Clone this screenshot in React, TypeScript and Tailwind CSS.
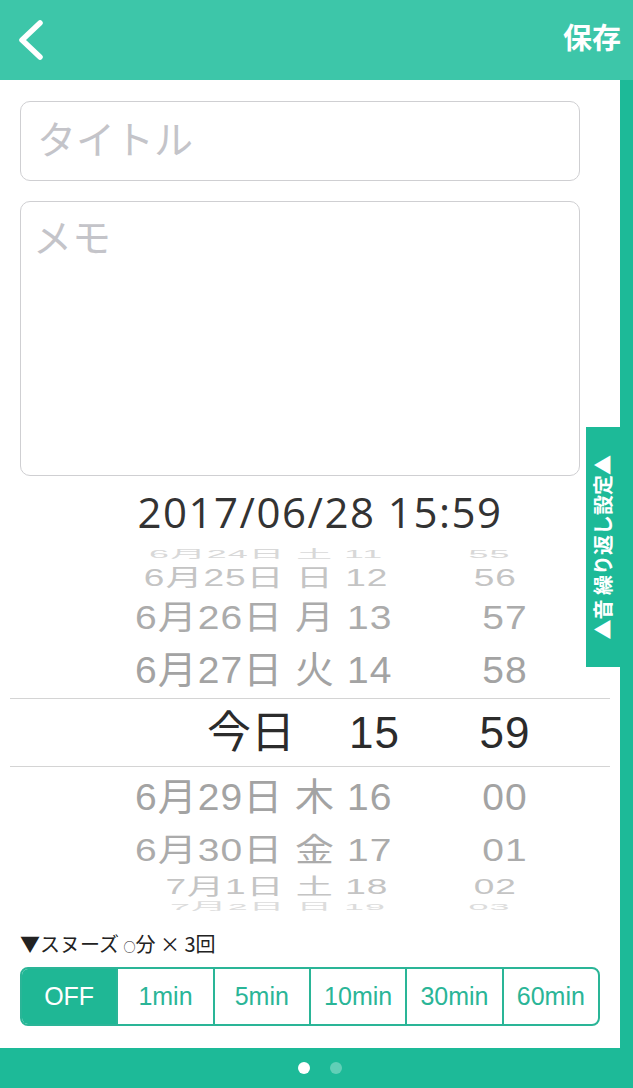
import React from 'react';

interface PickerRow {
  date: string;
  hour: string;
  minute: string;
  height: string;
  scale: string;
  color: string;
}

const upperRows: PickerRow[] = [
  { date: '6月24日 土', hour: '11', minute: '55', height: 'h-[18px]', scale: 'scale-y-[0.3] scale-x-[0.92]', color: 'text-[#d8d8d8]' },
  { date: '6月25日 日', hour: '12', minute: '56', height: 'h-[31px]', scale: 'scale-y-[0.6] scale-x-[0.95]', color: 'text-[#c4c4c4]' },
  { date: '6月26日 月', hour: '13', minute: '57', height: 'h-[48px]', scale: 'scale-y-[0.85]', color: 'text-[#ababab]' },
  { date: '6月27日 火', hour: '14', minute: '58', height: 'h-[57px]', scale: 'scale-y-[0.97]', color: 'text-[#a3a3a3]' },
];

const lowerRows: PickerRow[] = [
  { date: '6月29日 木', hour: '16', minute: '00', height: 'h-[58px]', scale: 'scale-y-[0.97]', color: 'text-[#a3a3a3]' },
  { date: '6月30日 金', hour: '17', minute: '01', height: 'h-[48px]', scale: 'scale-y-[0.82]', color: 'text-[#ababab]' },
  { date: '7月1日 土', hour: '18', minute: '02', height: 'h-[27px]', scale: 'scale-y-[0.55] scale-x-[0.95]', color: 'text-[#c4c4c4]' },
  { date: '7月2日 日', hour: '19', minute: '03', height: 'h-[12px]', scale: 'scale-y-[0.25] scale-x-[0.92]', color: 'text-[#dcdcdc]' },
];

const snoozeOptions = ['OFF', '1min', '5min', '10min', '30min', '60min'];

function WheelRow({ row }: { row: PickerRow }) {
  return (
    <div className={`flex items-center overflow-hidden ${row.height} ${row.color}`}>
      <div className={`flex w-full items-center text-[39px] leading-none tracking-[1px] ${row.scale}`}>
        <span className="w-[325px] text-right whitespace-nowrap">{row.date}</span>
        <span className="w-[90px] pl-3">{row.hour}</span>
        <span className="w-[160px] text-center">{row.minute}</span>
      </div>
    </div>
  );
}

export default function App() {
  return (
    <div
      className="flex h-[1088px] w-[633px] flex-col overflow-hidden bg-[#1dba98]"
      style={{ fontFamily: '"Liberation Sans", "Noto Sans CJK JP", sans-serif' }}
    >
      {/* Header */}
      <div className="flex h-[80px] items-center justify-between bg-[#3dc6a9] pl-[14px] pr-[12px]">
        <svg width="32" height="40" viewBox="0 0 32 40" fill="none">
          <polyline points="26,3 8,20 26,37" stroke="white" strokeWidth="5.5" strokeLinecap="round" strokeLinejoin="round" />
        </svg>
        <span className="text-[29px] font-bold text-white">保存</span>
      </div>

      <div className="flex flex-1">
        {/* Main content */}
        <div className="relative flex w-[620px] flex-col bg-white px-5 pt-[21px]">
          <div className="flex h-[80px] w-[560px] items-center rounded-[10px] border border-[#cfcfd2] px-4 text-[39px] text-[#c4c4c9]">
            タイトル
          </div>
          <div className="mt-5 h-[275px] w-[560px] rounded-[10px] border border-[#cfcfd2] px-3 pt-[12px] text-[39px] leading-[50px] text-[#c4c4c9]">
            メモ
          </div>

          <div
            className="mt-[11px] pl-5 text-center text-[42px] leading-[50px] tracking-[1.5px] text-[#333]"
            style={{ fontFamily: '"Open Sans", "Noto Sans", sans-serif' }}
          >
            2017/06/28 15:59
          </div>

          {/* Date wheel */}
          <div className="-mx-[10px] mt-[7px] flex flex-col">
            {upperRows.map((row) => (
              <WheelRow key={row.date} row={row} />
            ))}
            <div className="flex h-[69px] items-center border-y border-[#d4d4d4] text-[44px] text-[#2b2b2b]">
              <span className="w-[325px] pr-[40px] text-right">今日</span>
              <span className="w-[90px] pl-[14px] tracking-[1px]">15</span>
              <span className="w-[160px] text-center tracking-[1px]">59</span>
            </div>
            {lowerRows.map((row) => (
              <WheelRow key={row.date} row={row} />
            ))}
          </div>

          {/* Snooze */}
          <div className="mt-[18px] text-[20px] leading-[28px] text-[#222]" style={{ fontFamily: '"Noto Sans CJK JP", sans-serif' }}>
            ▼スヌーズ <span className="text-[12px]">○</span>分 × 3回
          </div>
          <div className="mt-[6px] flex h-[59px] overflow-hidden rounded-[8px] border-2 border-[#2ab597]">
            {snoozeOptions.map((opt, i) => (
              <div
                key={opt}
                className={`flex flex-1 items-center justify-center text-[25px] ${
                  i === 0 ? 'bg-[#1fb795] text-white' : 'border-l-2 border-[#2ab597] text-[#2ab597]'
                }`}
              >
                {opt}
              </div>
            ))}
          </div>

          {/* Side drawer tab */}
          <div className="absolute top-[347px] right-0 flex h-[240px] w-[34px] items-center justify-center bg-[#1dba98]">
            <span
              className="rotate-180 text-[20px] font-bold whitespace-nowrap text-white [writing-mode:vertical-rl] [text-orientation:sideways]"
              style={{ fontFamily: '"Noto Sans CJK JP", sans-serif' }}
            >
              ▲音 繰り返し設定▲
            </span>
          </div>
        </div>
        <div className="flex-1 bg-[#1dba98]" />
      </div>

      {/* Page dots */}
      <div className="flex h-[40px] items-center justify-center gap-5 pl-[7px]">
        <span className="h-3 w-3 rounded-full bg-white" />
        <span className="h-3 w-3 rounded-full bg-white/30" />
      </div>
    </div>
  );
}
